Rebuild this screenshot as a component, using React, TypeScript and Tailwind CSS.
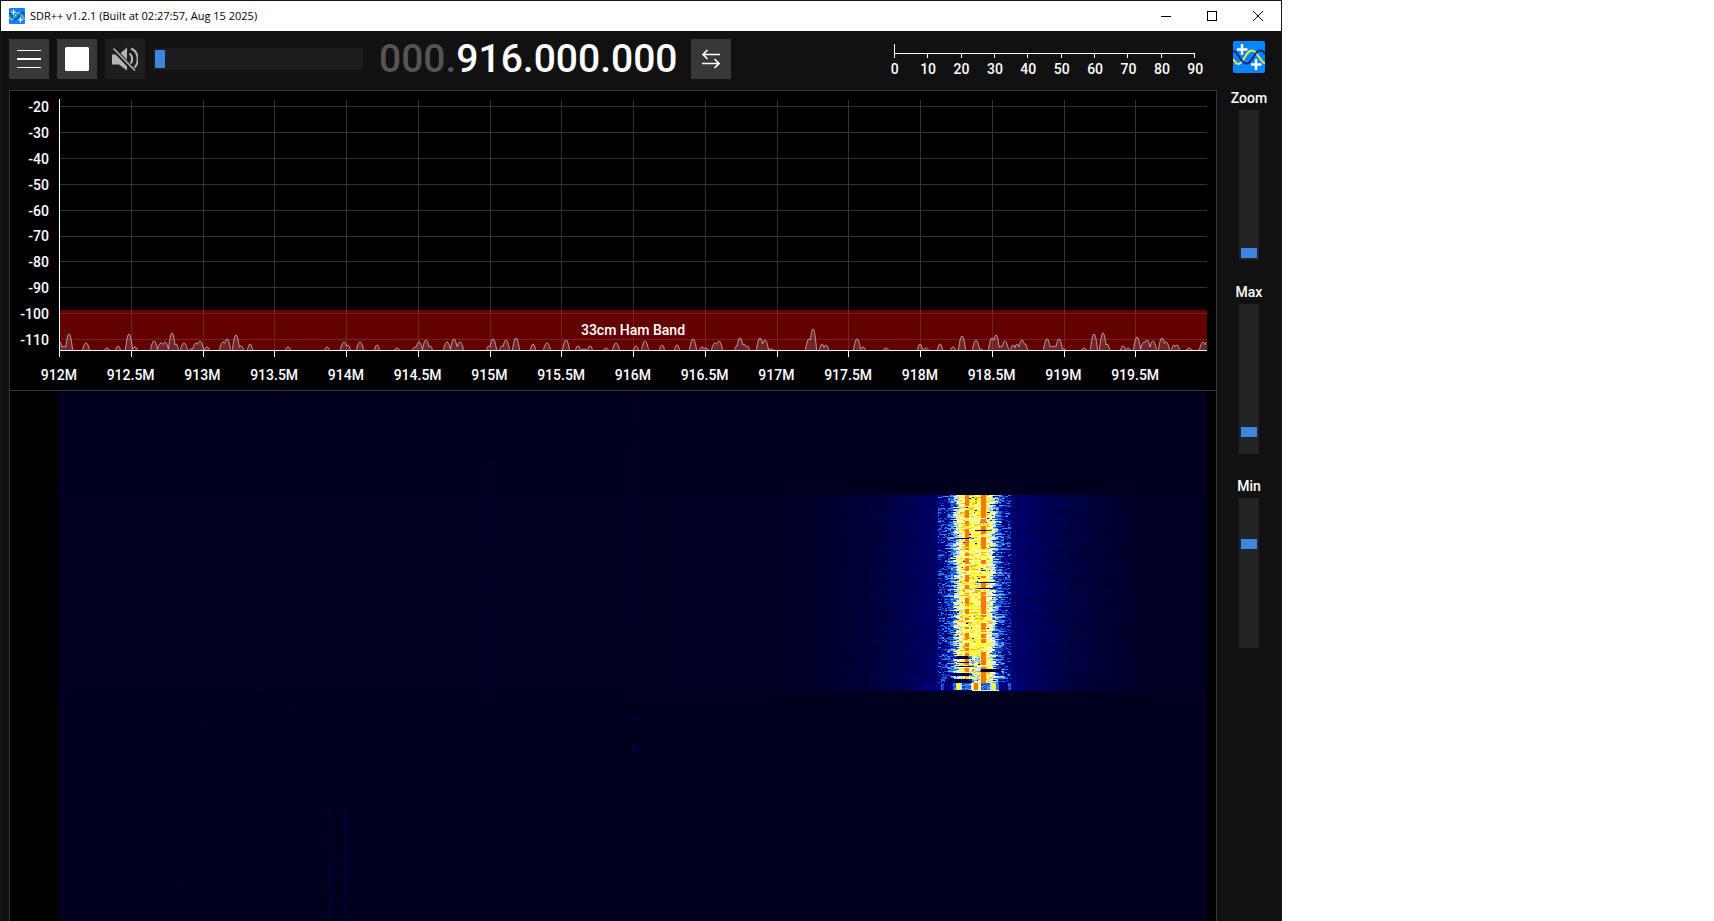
import React from "react";

/* ---------- deterministic noise ---------- */

function makeRandom(seed: number) {
  let s = seed;
  return () => {
    s = (s * 1664525 + 1013904223) % 4294967296;
    return s / 4294967296;
  };
}

/* ---------- spectrum trace ---------- */

const PLOT_W = 1148;
const PLOT_H = 258;
const BASE_Y = 251;

const PEAKS: [number, number][] = [
  [0, 9], [5, 4], [10, 16], [27, 7], [48, 2], [59, 4], [70, 16], [76, 3], [95, 9], [102, 7], [106, 8],
  [113, 17], [117, 6], [125, 7], [133, 1], [137, 7], [141, 9], [148, 3], [164, 8], [168, 11], [177, 15],
  [182, 4], [191, 6], [229, 3], [268, 3], [285, 8], [289, 5], [301, 8], [318, 5], [338, 2], [356, 3],
  [360, 8], [367, 10], [371, 4], [388, 8], [395, 11], [401, 8], [430, 4], [434, 11], [443, 4], [447, 10],
  [457, 12], [474, 6], [488, 7], [507, 10], [519, 4], [525, 1], [531, 4], [547, 2], [557, 7], [577, 4],
  [586, 9], [603, 5], [618, 5], [634, 11], [643, 3], [647, 2], [656, 7], [660, 9], [678, 4], [681, 12],
  [685, 6], [688, 4], [701, 12], [706, 10], [712, 1], [750, 11], [754, 21], [763, 6], [767, 5], [798, 11],
  [804, 3], [827, 2], [861, 6], [867, 2], [881, 6], [894, 3], [903, 14], [917, 10], [921, 1], [933, 12],
  [937, 15], [942, 4], [946, 9], [954, 5], [958, 6], [963, 10], [966, 6], [988, 11], [993, 4], [996, 4],
  [1000, 11], [1004, 1], [1025, 2], [1035, 16], [1044, 17], [1048, 6], [1064, 4], [1069, 2], [1078, 13],
  [1085, 8], [1088, 10], [1094, 9], [1103, 12], [1107, 8], [1115, 5], [1118, 5], [1130, 2], [1144, 8], [1148, 8],
];

function tracePath() {
  const pts: string[] = [];
  for (let x = 0; x <= PLOT_W; x += 0.5) {
    let h = -0.5;
    for (const [c, ph] of PEAKS) {
      const w = ph > 6 ? 3.6 : 2.6;
      const d = (x - c) / w;
      h = Math.max(h, ph * (1 - d * d));
    }
    pts.push(`${x} ${(BASE_Y - h).toFixed(1)}`);
  }
  return "M" + pts.join("L");
}

const TRACE = tracePath();

const LEVELS = [-20, -30, -40, -50, -60, -70, -80, -90, -100, -110];
const FREQS = [
  "912M", "912.5M", "913M", "913.5M", "914M", "914.5M", "915M", "915.5M",
  "916M", "916.5M", "917M", "917.5M", "918M", "918.5M", "919M", "919.5M",
];

function SpectrumPlot() {
  return (
    <svg className="block h-[258px] w-full" viewBox={`0 0 ${PLOT_W} ${PLOT_H}`} preserveAspectRatio="none" aria-hidden="true">
      <g stroke="#323232" shapeRendering="crispEdges">
        {LEVELS.map((l, i) => {
          const y = Math.round(7 + i * 25.9) + 0.5;
          return <line key={l} x1={0} x2={PLOT_W} y1={y} y2={y} />;
        })}
        {FREQS.map((f, i) => {
          const x = Math.round(i * 71.75) + 0.5;
          return <line key={f} x1={x} x2={x} y1={1} y2={BASE_Y} />;
        })}
      </g>
      <rect x={0} y={211} width={PLOT_W} height={40} fill="#ff0000" fillOpacity="0.39" />
      <path d={`${TRACE}V${BASE_Y}H0Z`} fill="#a0a8b8" fillOpacity="0.22" />
      <path d={TRACE} fill="none" stroke="#e0d8e0" strokeOpacity="0.68" />
      <g stroke="#ffffff" shapeRendering="crispEdges">
        <line x1={0.5} x2={0.5} y1={0} y2={BASE_Y} />
        <line x1={0} x2={PLOT_W} y1={BASE_Y + 0.5} y2={BASE_Y + 0.5} />
        {FREQS.map((f, i) => {
          const x = Math.round(i * 71.75) + 0.5;
          return <line key={f} x1={x} x2={x} y1={BASE_Y} y2={BASE_Y + 7} />;
        })}
      </g>
    </svg>
  );
}

/* ---------- waterfall ---------- */

const MAP = [
  [0, 0, 32], [0, 0, 48], [0, 0, 80], [0, 0, 145], [40, 144, 250], [255, 255, 255],
  [255, 250, 20], [250, 120, 10], [255, 0, 0],
];

function colourAt(v: number) {
  const t = Math.max(0, Math.min(MAP.length - 1.001, v));
  const i = Math.floor(t);
  const f = t - i;
  const c = MAP[i].map((a, k) => Math.round(a + (MAP[i + 1][k] - a) * f));
  return `rgb(${c.join(",")})`;
}

const TOP = 104;
const ROWS = 196;
const MID = 916;

/* rows where one side of the carrier drops out: [first row, last row, left x, right x] */
const DROPS: [number, number, number, number][] = [
  [35, 35, 916, 931], [43, 43, 893, 913], [87, 87, 916, 938], [93, 93, 916, 940],
  [161, 163, 893, 912], [167, 167, 897, 913], [171, 171, 895, 913], [174, 176, 917, 944],
  [178, 180, 887, 913], [184, 187, 881, 913],
];

function burstCells() {
  const rnd = makeRandom(77);
  const groups = new Map<number, string[]>();
  const put = (v: number, x: number, y: number, w: number) => {
    const q = Math.round(Math.max(0, v) * 6);
    if (!groups.has(q)) groups.set(q, []);
    groups.get(q)!.push(`M${x} ${y}h${w}v1h${-w}z`);
  };
  const CELL = 1.5;
  let leftMark = 0;
  let rightMark = 0;
  for (let r = 0; r < ROWS - 8; r++) {
    if (rnd() < 0.6) leftMark = rnd();
    if (rnd() < 0.5) rightMark = rnd();
    const edgeL = 20 + (rnd() - 0.5) * 7;
    const edgeR = 18 + (rnd() - 0.5) * 7;
    let prev = rnd();
    for (let x = MID - 37.5; x < MID + 36; x += CELL) {
      const d = x - MID;
      const a = Math.abs(d);
      const edge = d < 0 ? edgeL : edgeR;
      const n = rnd() < 0.45 ? prev : rnd();
      prev = n;
      let v: number;
      if (a < edge - 5) v = n > 0.85 ? 6.3 + rnd() * 0.4 : 5.2 + n * 1.05;
      else if (a < edge) v = 4.5 + n * 1.3;
      else if (a < edge + 9) v = 3.1 + n * 1.7 - (a - edge) * 0.06;
      else v = n > 0.62 ? 3.2 + (n - 0.62) * 2.4 : 2.6 + n * 0.6;
      if (a > 28 && rnd() < 0.25) v = 2.7;
      if (a < 15 && rnd() < 0.014) v = 2.6 + rnd();
      if (d >= -10.5 && d < -6 && leftMark < 0.66) v = 6.95;
      if (d >= 6 && d < 10.5 && rightMark < 0.74) v = 7;
      for (const [r0, r1, x0, x1] of DROPS) {
        if (r >= r0 && r <= r1 && x >= x0 && x <= x1) {
          const fade = Math.min(x - x0, x1 - x) < 4 ? 1.6 : 0;
          v = 1 + n * 1.8 + fade;
        }
      }
      if (r >= 161 && a < 4 && rnd() < 0.6) v = 4 + n * 1.2;
      put(v, x, TOP + r, CELL);
    }
  }
  for (let r = ROWS - 8; r < ROWS; r++) {
    for (let x = MID - 52.5; x < MID + 51; x += CELL) {
      const d = x - MID;
      const a = Math.abs(d);
      let v = 2.5 + rnd() * 0.3;
      if (a < 2.5) v = 7;
      else if (a < 5) v = 5.2 + rnd() * 0.6;
      else if (a < 14) v = 3.1 + rnd() * 1.3;
      else if (a < 20) v = a > 15 && a < 19 ? 6 : 4.6;
      else if (a < 24) v = 3.5 + rnd() * 0.5;
      else if (a > 32 && a < 36) v = 3.2 + rnd();
      else if (a > 48 && a < 51) v = 2.7 + rnd() * 0.4;
      if (r === ROWS - 1) v = d > -4 && d < 24 ? 4.9 : 2.5;
      put(v, x, TOP + r, CELL);
    }
  }
  return [...groups.entries()].map(([q, d]) => ({ fill: colourAt(q / 6), d: d.join("") }));
}

function streaks(seed: number, count: number, x0: number, x1: number, bias: number) {
  const rnd = makeRandom(seed);
  let d = "";
  for (let i = 0; i < count; i++) {
    const t = Math.pow(rnd(), bias);
    const x = Math.round(rnd() < 0.5 ? MID - t * (MID - x0) : MID + t * (x1 - MID));
    const y = TOP + Math.floor(rnd() * ROWS);
    const l = 4 + Math.floor(rnd() * 22);
    d += `M${x} ${y}h${l}v1h-${l}z`;
  }
  return d;
}

function specks(seed: number, count: number, x0: number, x1: number, y0: number, y1: number, w: number) {
  const rnd = makeRandom(seed);
  let d = "";
  for (let i = 0; i < count; i++) {
    const x = Math.round(x0 + rnd() * (x1 - x0));
    const y = Math.round(y0 + rnd() * (y1 - y0));
    const l = 1 + Math.floor(rnd() * w);
    d += `M${x} ${y}h${l}v1h-${l}z`;
  }
  return d;
}

const BURST = burstCells();
const GLOW_LIGHT = streaks(5, 900, 810, 1020, 1.6);
const GLOW_DARK = streaks(9, 1100, 780, 1070, 1.4);

function Waterfall() {
  return (
    <svg
      className="block h-full w-full bg-[#00001e]"
      viewBox="0 0 1148 530"
      preserveAspectRatio="none"
      role="img"
      aria-label="Waterfall"
    >
      <defs>
        <linearGradient id="glow" x1="0" x2="1" y1="0" y2="0">
          <stop offset="0" stopColor="#000020" />
          <stop offset="0.58" stopColor="#000022" />
          <stop offset="0.67" stopColor="#00002c" />
          <stop offset="0.72" stopColor="#000040" />
          <stop offset="0.765" stopColor="#00006a" />
          <stop offset="0.8" stopColor="#000088" />
          <stop offset="0.835" stopColor="#00006c" />
          <stop offset="0.88" stopColor="#000040" />
          <stop offset="0.94" stopColor="#000028" />
          <stop offset="1" stopColor="#000020" />
        </linearGradient>
      </defs>
      <rect x={0} y={0} width={2} height={530} fill="#000030" />
      <rect x={0} y={TOP} width={1148} height={ROWS} fill="url(#glow)" />
      <g shapeRendering="crispEdges">
        <path d={GLOW_DARK} fill="#000020" fillOpacity="0.25" />
        <path d={GLOW_LIGHT} fill="#0000a8" fillOpacity="0.16" />
        <path d={specks(21, 400, 0, 400, 0, 530, 8)} fill="#00002e" fillOpacity="0.5" />
        <path d={specks(22, 90, 428, 433, 60, 300, 3)} fill="#000040" fillOpacity="0.6" />
        <path d={specks(23, 60, 572, 577, 0, 240, 3)} fill="#000040" fillOpacity="0.6" />
        <path d={specks(24, 10, 573, 576, 322, 328, 4)} fill="#000048" />
        <path d={specks(28, 12, 572, 576, 354, 360, 4)} fill="#000050" />
        <path d={specks(25, 130, 268, 272, 420, 530, 4)} fill="#000042" fillOpacity="0.7" />
        <path d={specks(26, 150, 284, 288, 416, 530, 4)} fill="#000048" fillOpacity="0.7" />
        {BURST.map((b) => (
          <path key={b.fill} d={b.d} fill={b.fill} />
        ))}
      </g>
    </svg>
  );
}

/* ---------- small parts ---------- */

function Logo({ className }: { className: string }) {
  return (
    <svg className={className} viewBox="0 0 32 32" aria-hidden="true">
      <rect width="32" height="32" rx="2" fill="#0a84ff" />
      <path d="M0 18C2 21 3 23 5.500 23C9 23 11 17 13.500 13.500C15.500 10.500 17 9.500 19 9.500C22 9.500 24 13 26 16C28 19 30 22 32 22.500" fill="none" stroke="#e6ef3c" strokeWidth="2" />
      <path d="M0 10C3 10 5 14 7 17C9 20.500 11 22.500 13.500 22.500C17 22.500 19 18 21 15C23 11.500 25 9.500 27.500 9.500C29.500 9.500 31 11 32 13" fill="none" stroke="#0a2a80" strokeWidth="2" />
      <path d="M9 3V14M4 8.500H14.500M23 18V29M18 23.500H28.500" stroke="#fff" strokeWidth="2.400" />
    </svg>
  );
}

function SideSlider({ id, label, value }: { id: string; label: string; value: number }) {
  return (
    <div className="flex flex-col items-center gap-0.5">
      <label htmlFor={id} className="text-sm leading-5">
        {label}
      </label>
      <input
        id={id}
        type="range"
        min={0}
        max={100}
        defaultValue={value}
        className="h-[150px] w-5 appearance-none bg-[#222325] p-0.5 [direction:rtl] [writing-mode:vertical-lr] [&::-webkit-slider-thumb]:h-2.5 [&::-webkit-slider-thumb]:w-4 [&::-webkit-slider-thumb]:appearance-none [&::-webkit-slider-thumb]:bg-[#3d85e0]"
      />
    </div>
  );
}

function TitleBar() {
  return (
    <header className="flex h-[30px] shrink-0 items-center bg-white text-black">
      <div className="flex flex-1 items-center gap-[5px] pl-2">
        <Logo className="h-4 w-4" />
        <h1 className="font-['Open_Sans','Noto_Sans',sans-serif] text-[11px] leading-4 font-normal">
          SDR++ v1.2.1 (Built at 02:27:57, Aug 15 2025)
        </h1>
      </div>
      <button type="button" aria-label="Minimize" className="flex h-full w-[46px] items-center justify-center">
        <svg width="10" height="10" viewBox="0 0 10 10" stroke="#000" shapeRendering="crispEdges">
          <path d="M0 5.500H10" />
        </svg>
      </button>
      <button type="button" aria-label="Maximize" className="flex h-full w-[46px] items-center justify-center">
        <svg width="10" height="10" viewBox="0 0 10 10" fill="none" stroke="#000" shapeRendering="crispEdges">
          <rect x="0.5" y="0.5" width="9" height="9" />
        </svg>
      </button>
      <button type="button" aria-label="Close" className="flex h-full w-[46px] items-center justify-center">
        <svg width="10" height="10" viewBox="0 0 10 10" stroke="#000">
          <path d="M0 0L10 10M10 0L0 10" />
        </svg>
      </button>
    </header>
  );
}

function Toolbar() {
  return (
    <div className="flex h-[59px] shrink-0 items-start gap-2 pt-2">
      <button type="button" aria-label="Menu" className="flex size-10 shrink-0 items-center justify-center bg-[#383838]">
        <svg width="24" height="20" viewBox="0 0 24 20" fill="#fff" shapeRendering="crispEdges">
          <rect x="0" y="1" width="24" height="1" />
          <rect x="0" y="9" width="24" height="2" />
          <rect x="0" y="18" width="24" height="1" />
        </svg>
      </button>
      <button type="button" aria-label="Stop" className="flex size-10 shrink-0 items-center justify-center bg-[#383838]">
        <svg width="24" height="24" viewBox="0 0 24 24">
          <rect width="24" height="24" rx="1.500" fill="#fff" />
        </svg>
      </button>
      <button type="button" aria-label="Muted" className="flex size-10 shrink-0 items-center justify-center bg-[#1e1e1e]">
        <svg width="26" height="24" viewBox="0 0 26 24">
          <path d="M0 7.500H7L15 0.500V23.500L7 17.500H0Z" fill="#b4b4b4" />
          <path d="M17.500 6.500C21 9 21 15 17.500 17.500" fill="none" stroke="#b4b4b4" strokeWidth="2" />
          <path d="M19 1.500C27.500 5 27.500 18 21 21.500" fill="none" stroke="#b4b4b4" strokeWidth="2" />
          <path d="M0 0.500L22.500 24" stroke="#1e1e1e" strokeWidth="4.500" />
          <path d="M1.500 1.500L23 23.500" stroke="#b4b4b4" strokeWidth="1.600" />
        </svg>
      </button>
      <input
        type="range"
        aria-label="Volume"
        min={0}
        max={100}
        defaultValue={0}
        className="mt-[9px] h-[22px] w-[210px] shrink-0 appearance-none bg-[#1b1c1e] p-0.5 [&::-webkit-slider-thumb]:h-[18px] [&::-webkit-slider-thumb]:w-2.5 [&::-webkit-slider-thumb]:appearance-none [&::-webkit-slider-thumb]:bg-[#3d85e0]"
      />
      <output aria-label="Frequency" className="ml-2 shrink-0 text-[39px] leading-10 font-medium whitespace-nowrap">
        <span className="text-[#555555]">000.</span>916.000.000
      </output>
      <button type="button" aria-label="Tuning mode" className="ml-[5px] flex size-10 shrink-0 items-center justify-center bg-[#383838]">
        <svg width="20" height="20" viewBox="0 0 20 20" fill="none" stroke="#fff" strokeWidth="1.700">
          <path d="M19 5.500H2M6.500 1L2 5.500L6.500 10" />
          <path d="M1 14.500H18M13.500 10L18 14.500L13.500 19" />
        </svg>
      </button>
      <div className="mt-[5px] mr-[5px] ml-auto w-[334px]">
        <svg className="mx-auto block" width="302" height="14" viewBox="0 0 302 14" stroke="#fff" shapeRendering="crispEdges">
          <path d="M0.500 0V14M0 9.500H301" />
          {[1, 2, 3, 4, 5, 6, 7, 8, 9].map((i) => {
            const x = Math.round(i * 33.33) + 0.5;
            return <line key={i} x1={x} x2={x} y1={9} y2={14} />;
          })}
        </svg>
        <div className="mt-px grid grid-cols-10 text-center text-sm leading-5">
          {[0, 10, 20, 30, 40, 50, 60, 70, 80, 90].map((n) => (
            <span key={n}>{n}</span>
          ))}
        </div>
      </div>
    </div>
  );
}

export default function App() {
  return (
    <div className="h-screen bg-white pr-[432px]">
      <main className="flex h-full flex-col overflow-hidden border-x border-t border-[#17171c] bg-[#111111] font-[Roboto,sans-serif] font-medium text-white">
        <TitleBar />
        <div className="flex min-h-0 flex-1">
          <div className="flex min-w-0 flex-1 flex-col pl-2">
            <Toolbar />
            <section className="flex min-h-0 flex-1 flex-col border-x border-t border-[#363636] bg-black">
              <div className="flex h-[299px] shrink-0 pr-[9px]">
                <div className="mt-[3px] grid h-[259px] w-[49px] shrink-0 grid-rows-10 items-center pr-2.5 text-right text-sm leading-5">
                  {LEVELS.map((l) => (
                    <span key={l}>{l}</span>
                  ))}
                </div>
                <div className="relative min-w-0 flex-1 pt-2">
                  <SpectrumPlot />
                  <span className="absolute inset-x-0 top-[229px] text-center text-sm leading-5">33cm Ham Band</span>
                  <div className="mt-2 mr-9 -ml-9 grid grid-cols-16 text-center text-sm leading-5">
                    {FREQS.map((f) => (
                      <span key={f}>{f}</span>
                    ))}
                  </div>
                </div>
              </div>
              <div className="min-h-0 flex-1 border-t border-[#363636] pr-[9px] pl-[49px]">
                <Waterfall />
              </div>
            </section>
          </div>
          <aside className="flex w-16 shrink-0 flex-col items-center pt-2.5">
            <Logo className="size-8" />
            <div className="mt-[15px] flex flex-col gap-[22px]">
              <SideSlider id="zoom" label="Zoom" value={0} />
              <SideSlider id="max" label="Max" value={11} />
              <SideSlider id="min" label="Min" value={71} />
            </div>
          </aside>
        </div>
      </main>
    </div>
  );
}
